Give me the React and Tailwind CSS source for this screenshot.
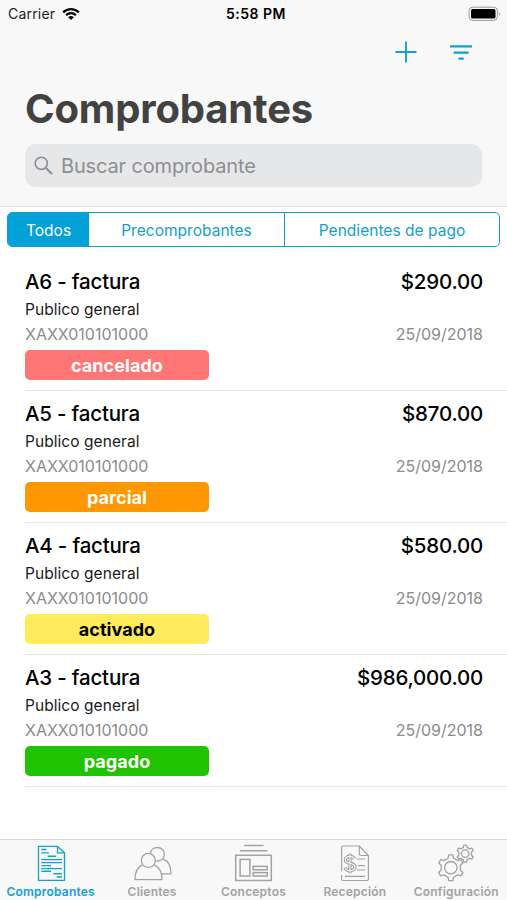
const rows = [
  { id: "A6", amount: "$290.00", status: "cancelado", badge: "bg-[#ff7676] text-white" },
  { id: "A5", amount: "$870.00", status: "parcial", badge: "bg-[#ff9800] text-white" },
  { id: "A4", amount: "$580.00", status: "activado", badge: "bg-[#ffeb5c] text-black" },
  { id: "A3", amount: "$986,000.00", status: "pagado", badge: "bg-[#1fc300] text-white" },
];

// Outline of a cog with flat-topped teeth, the first tooth pointing up.
function gearPath(cx, cy, outer, root, teeth) {
  const step = (Math.PI * 2) / teeth;
  const pts = [];
  for (let i = 0; i < teeth; i++) {
    const a = i * step - Math.PI / 2;
    [[-0.27, root], [-0.15, outer], [0.15, outer], [0.27, root]].forEach(([k, r]) => {
      pts.push(`${(cx + r * Math.cos(a + k * step)).toFixed(2)} ${(cy + r * Math.sin(a + k * step)).toFixed(2)}`);
    });
  }
  return `M${pts.join("L")}Z`;
}

function DocIcon() {
  return (
    <svg width="42" height="40" viewBox="0 0 42 40" fill="none" stroke="currentColor" strokeWidth="1.3">
      <path d="M8.5 4.4H27.5L34.5 10.8V38.4H8.5Z" />
      <path d="M27.5 4.4V10.8H34.5" />
      <path d="M11.3 7.5H16.5M11.3 10.9H19M17.5 14.3H26M11.3 17.6H32M11.3 20.6H32M11.3 23.6H21M11.3 26.6H32M11.3 29.2H21M23.5 31.8H32M26.8 35H32" strokeWidth="1.4" />
    </svg>
  );
}

function ClientsIcon() {
  return (
    <svg width="42" height="40" viewBox="0 0 42 40" fill="none" stroke="currentColor" strokeWidth="1.3" strokeLinejoin="round">
      <circle cx="17.3" cy="18.4" r="7" />
      <path d="M11.6 22.6C6.2 25 4 29.5 4 37.6H31C31 29.5 28.4 25 23 22.6" />
      <path d="M19.6 11.2C19.8 7.6 22.8 5.5 26.4 5.5C30.4 5.5 33.4 8.5 33.4 12.2C33.4 16.2 30.4 19 26.6 19C25.8 19 25.1 18.9 24.4 18.7" />
      <path d="M32 16.8C37.4 19 40 23.6 40 31.8H30" />
    </svg>
  );
}

function ConceptsIcon() {
  return (
    <svg width="42" height="40" viewBox="0 0 42 40" fill="none" stroke="currentColor" strokeWidth="1.5">
      <path d="M12 3.5H31.5M8 8.7H35.5" />
      <rect x="3.7" y="13.3" width="35.6" height="25.2" />
      <rect x="8.1" y="17.4" width="9.8" height="16.6" />
      <rect x="21.2" y="24.4" width="14" height="3.4" />
      <rect x="21.2" y="30.6" width="14" height="3.4" />
    </svg>
  );
}

function ReceptionIcon() {
  return (
    <svg width="42" height="40" viewBox="0 0 42 40" fill="none" stroke="currentColor" strokeWidth="1.2" strokeLinejoin="round">
      <path d="M7.6 29V5.5Q7.6 4 9 4H25.3L34.4 13.5V37Q34.4 38.5 33 38.5H9Q7.6 38.5 7.6 37V33" />
      <path d="M25.3 4V12Q25.3 13.5 26.8 13.5H34.4M22.5 17H31M24 23.6H31M22.5 28H31M11 34.3H31" />
      <path d="M20.4 16.6C19.4 14.9 17.9 14.4 16 14.4C13.2 14.4 11.4 15.9 11.4 17.9C11.4 22.6 21 19.8 21 24.8C21 27.3 18.8 28.7 16 28.7C13.4 28.7 11.6 27.8 11 25.4M16 11.8V31.3" strokeWidth="3.3" />
      <path d="M20.4 16.6C19.4 14.9 17.9 14.4 16 14.4C13.2 14.4 11.4 15.9 11.4 17.9C11.4 22.6 21 19.8 21 24.8C21 27.3 18.8 28.7 16 28.7C13.4 28.7 11.6 27.8 11 25.4M16 12.4V30.7" stroke="#f8f8f8" strokeWidth="1.1" />
    </svg>
  );
}

function GearsIcon() {
  return (
    <svg width="42" height="40" viewBox="0 0 42 40" fill="none" stroke="currentColor" strokeWidth="1.3" strokeLinejoin="round">
      <path d={gearPath(15.8, 25.7, 13, 9.9, 6)} />
      <circle cx="15.8" cy="25.7" r="6.2" />
      <path d={gearPath(30.2, 11.6, 8.6, 6.5, 6)} />
      <circle cx="30.2" cy="11.6" r="3.8" />
    </svg>
  );
}

const tabs = [
  { label: "Comprobantes", icon: DocIcon, cls: "text-[#12a0d0]" },
  { label: "Clientes", icon: ClientsIcon, cls: "text-[#a2a2a2]" },
  { label: "Conceptos", icon: ConceptsIcon, cls: "text-[#a2a2a2]" },
  { label: "Recepción", icon: ReceptionIcon, cls: "text-[#a2a2a2]" },
  { label: "Configuración", icon: GearsIcon, cls: "text-[#a2a2a2]" },
];

export default function App() {
  return (
    <div className="flex h-[900px] w-[507px] flex-col overflow-hidden bg-white font-['Inter',sans-serif] text-black">
      <header className="flex h-[207px] shrink-0 flex-col border-b border-[#dedede] bg-[#f8f8f8]">
        <div className="grid h-[27px] grid-cols-3 items-center pr-[6px] pl-[8px] text-[14px]">
          <div className="flex items-center gap-[7px] text-[#222]">
            <span className="tracking-[0.2px]">Carrier</span>
            <svg width="18" height="14" viewBox="0 0 18 14" fill="none" stroke="#000" strokeWidth="2.2">
              <path d="M1.2 5.4C5.6 1.1 12.4 1.1 16.8 5.4M4.1 8.2C6.9 5.5 11.1 5.5 13.9 8.2" />
              <path d="M6.2 10.2Q9 7.8 11.8 10.2L9 13Z" fill="#000" stroke="none" />
            </svg>
          </div>
          <div className="pl-[3px] text-center font-semibold tracking-[0.5px]">5:58 PM</div>
          <svg className="justify-self-end" width="33" height="16" viewBox="0 0 33 16">
            <rect x="1" y="1.2" width="28.4" height="13.2" rx="3.6" fill="none" stroke="#999" strokeWidth="1" />
            <rect x="3" y="3.1" width="24.5" height="9.4" rx="1.6" />
            <path d="M31 5.8Q32.6 7.8 31 9.8Z" fill="#888" />
          </svg>
        </div>
        <div className="flex h-[49px] items-center justify-end gap-[32px] pr-[34px] text-[#0fa0d2]">
          <svg width="22" height="22" viewBox="0 0 22 22" stroke="currentColor" strokeWidth="1.9">
            <path d="M11 0.5V21.5M0.5 11H21.5" />
          </svg>
          <svg width="24" height="22" viewBox="0 0 24 22" stroke="currentColor" strokeWidth="2.2">
            <path d="M1 5.4H23M4.6 11.6H19.6M9.5 17.7H14.7" />
          </svg>
        </div>
        <h1 className="h-[68px] pl-[25px] text-[40px] leading-[66px] font-bold tracking-[-0.15px] text-[#424242]">Comprobantes</h1>
        <div className="mx-[25px] flex h-[43px] items-center gap-[8px] rounded-[11px] bg-[#e6e7e8] pl-[9px] text-[#8e8e93]">
          <svg width="19" height="19" viewBox="0 0 19 19" fill="none" stroke="currentColor" strokeWidth="1.6">
            <circle cx="7.3" cy="7.3" r="6.1" />
            <path d="M11.7 11.7L18 18" strokeWidth="2" />
          </svg>
          <span className="text-[20px] tracking-[-0.15px]">Buscar comprobante</span>
        </div>
      </header>

      <div className="mx-[7px] mt-[5px] flex h-[35px] shrink-0 overflow-hidden rounded-[5px] border border-[#0fa0d2] text-[15.5px] leading-[35px] tracking-[0.03px] text-[#12a0d0]">
        <div className="w-[81px] bg-[#02a1d8] text-center text-white">Todos</div>
        <div className="w-[196px] border-r border-[#0fa0d2] text-center">Precomprobantes</div>
        <div className="flex-1 text-center">Pendientes de pago</div>
      </div>

      <main className="flex flex-1 flex-col pt-[12px] pl-[25px]">
        {rows.map((r) => (
          <section key={r.id} className="flex h-[132px] flex-col border-b border-[#e6e6e6] pt-[10px] pr-[24px]">
            <div className="flex h-[25px] justify-between text-[20.5px] leading-[25px] font-medium tracking-[-0.2px]">
              <span>{r.id} - factura</span>
              <span>{r.amount}</span>
            </div>
            <div className="mt-[5px] h-[20px] text-[15.5px] leading-[21px] tracking-[0.06px] text-[#1a1a1a]">Publico general</div>
            <div className="mt-[5px] flex h-[20px] justify-between text-[16px] leading-[20px] text-[#8b8b8b]">
              <span>XAXX010101000</span>
              <span>25/09/2018</span>
            </div>
            <div className={`mt-[6px] h-[30px] w-[184px] rounded-[5px] text-center text-[18px] leading-[31px] font-bold tracking-[0.05px] ${r.badge}`}>
              {r.status}
            </div>
          </section>
        ))}
      </main>

      <nav className="grid h-[61px] shrink-0 grid-cols-5 border-t border-[#d8d8d8] bg-[#f8f8f8]">
        {tabs.map((t) => (
          <div key={t.label} className={`flex flex-col items-center pt-[2px] ${t.cls}`}>
            <t.icon />
            <span className="mt-[2px] text-[12px] leading-[16px] font-semibold tracking-[0.2px] whitespace-nowrap">{t.label}</span>
          </div>
        ))}
      </nav>
    </div>
  );
}
